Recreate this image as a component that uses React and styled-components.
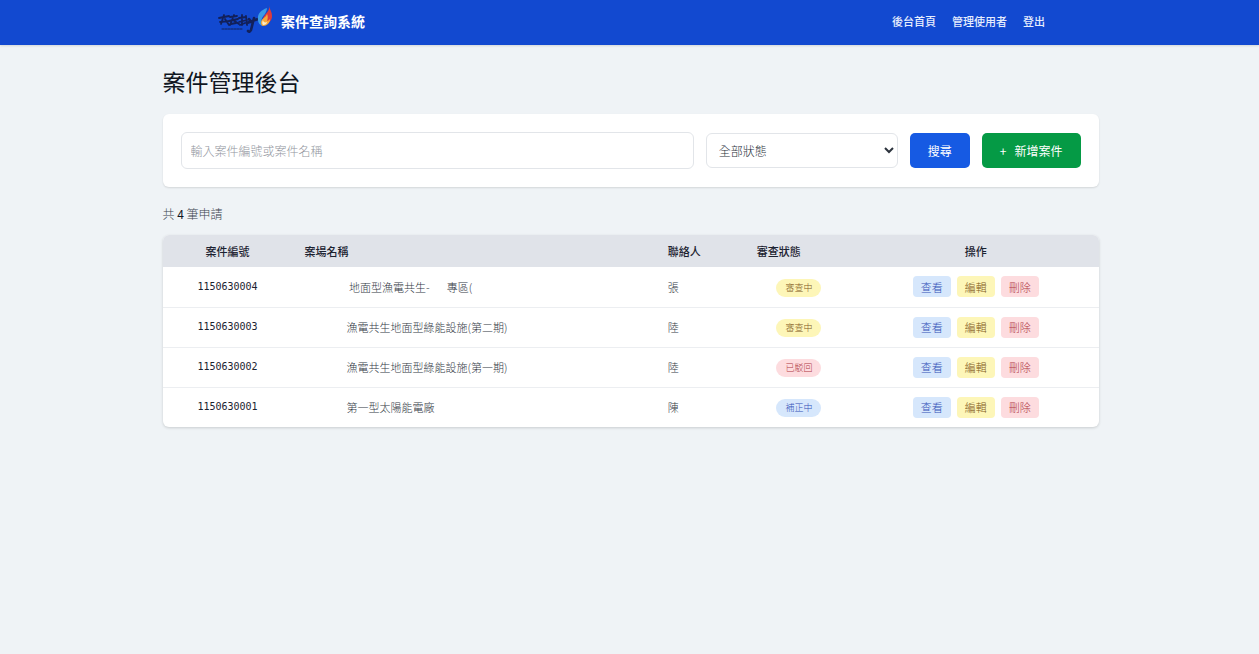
import React, { useState } from 'react'
import styled, { createGlobalStyle } from 'styled-components'

const cases = [
    { id: '1150630004', name: '\u00a0地面型漁電共生-\u00a0\u00a0\u00a0\u00a0\u00a0\u00a0\u00a0專區(', contact: '張', status: '審查中' },
    { id: '1150630003', name: '漁電共生地面型綠能設施(第二期)', contact: '陸', status: '審查中' },
    { id: '1150630002', name: '漁電共生地面型綠能設施(第一期)', contact: '陸', status: '已駁回' },
    { id: '1150630001', name: '第一型太陽能電廠', contact: '陳', status: '補正中' },
]

const tones = {
    blue: { bg: '#d6e7fc', color: '#3450b8' },
    yellow: { bg: '#fdf6b8', color: '#80591a' },
    red: { bg: '#fddcdf', color: '#b03a44' },
}

const statusTone = {
    '審查中': 'yellow',
    '已駁回': 'red',
    '補正中': 'blue',
}

const Logo = () => (
    <svg width="54" height="30" viewBox="0 0 54 30" aria-hidden="true">
        <g fill="none" stroke="#12205a" strokeLinecap="round" strokeLinejoin="round">
            <path strokeWidth="1.8" d="M1 12l10-2M2 16l9-1M6 9l-3 9M7 13l4 6M12 11l7-1M11 15l9-2M16 9l-4 10M15 14l6 4M13 18l5-1" />
            <path strokeWidth="1.8" d="M21 12l7-1M21 16l8-2M24 9v10M28 10l1 9M22 19l5-2" />
            <path strokeWidth="2.6" d="M29 17l11-4M31 13l2 3M36 12l-3 12c-1 2-2 2-3 1" />
            <path strokeWidth="1" strokeDasharray="2 1" d="M4 23h21" />
        </g>
        <path fill="#3a9be6" d="M49 2c-6 2-10 6-9 12 0 3 2 5 4 6-2-5 0-9 3-12 1-2 2-4 2-6z" />
        <path fill="#dd3b3c" d="M51 0c1 4-2 6-4 9-2 2-3 6-2 9 5 1 9-3 9-8 0-4-2-6-3-10z" />
        <path fill="#f6a93a" d="M49 8c-1 4-6 4-6 9 0 2 1 3 2 3 4 0 7-3 7-7-1 1-2 2-3 2 1-3 1-5 0-7z" />
        <path fill="#fbeecb" d="M45 14c-1 2-1 4 0 5 2 0 4-1 4-3-2 1-4 0-4-2z" />
    </svg>
)

const App = () => {

    const [keyword, setKeyword] = useState('');
    const [status, setStatus] = useState('');

    return (
        <>
            <GlobalStyle />
            <Header>
                <HeaderInner>
                    <Brand href="#">
                        <Logo />
                        案件查詢系統
                    </Brand>
                    <Nav>
                        <NavLink href="#">後台首頁</NavLink>
                        <NavLink href="#">管理使用者</NavLink>
                        <NavLink href="#">登出</NavLink>
                    </Nav>
                </HeaderInner>
            </Header>
            <Main>
                <Title>案件管理後台</Title>
                <SearchCard onSubmit={(e) => e.preventDefault()}>
                    <SearchInput
                        type="text"
                        aria-label="輸入案件編號或案件名稱"
                        placeholder="輸入案件編號或案件名稱"
                        value={keyword}
                        onChange={(e) => setKeyword(e.target.value)}
                    />
                    <StatusSelect aria-label="全部狀態" value={status} onChange={(e) => setStatus(e.target.value)}>
                        <option value="">全部狀態</option>
                        <option value="審查中">審查中</option>
                        <option value="已駁回">已駁回</option>
                        <option value="補正中">補正中</option>
                    </StatusSelect>
                    <Button type="submit" $bg="#165ae3">搜尋</Button>
                    <Button type="button" $bg="#059a45"><span>+</span> 新增案件</Button>
                </SearchCard>
                <Count>共 <b>{cases.length}</b> 筆申請</Count>
                <Table>
                    <thead>
                        <tr>
                            <Th $width="13.9%" $center>案件編號</Th>
                            <Th $width="38.8%">案場名稱</Th>
                            <Th $width="9.5%">聯絡人</Th>
                            <Th $width="11.6%">審查狀態</Th>
                            <Th $width="26.2%" $center>操作</Th>
                        </tr>
                    </thead>
                    <tbody>
                        {cases.map((item) => (
                            <Row key={item.id}>
                                <IdCell>{item.id}</IdCell>
                                <NameCell>{item.name}</NameCell>
                                <Td>{item.contact}</Td>
                                <Td $center>
                                    <Badge $tone={statusTone[item.status]}>{item.status}</Badge>
                                </Td>
                                <Td $center>
                                    <Actions>
                                        <ActionButton type="button" $tone="blue">查看</ActionButton>
                                        <ActionButton type="button" $tone="yellow">編輯</ActionButton>
                                        <ActionButton type="button" $tone="red">刪除</ActionButton>
                                    </Actions>
                                </Td>
                            </Row>
                        ))}
                    </tbody>
                </Table>
            </Main>
        </>
    )
}

export default App

const GlobalStyle = createGlobalStyle`
    * {
        box-sizing: border-box;
    }

    body {
        margin: 0;
        background-color: #eff3f6;
        color: #1b2230;
        font-family: "Noto Sans CJK TC", sans-serif;
        font-size: 12px;
        line-height: 18px;
    }

    button, input, select {
        font-family: inherit;
    }
`

const Header = styled.header`
    background-color: #1249d0;
    padding: 0 16px 4px 20px;
    box-shadow: 0 1px 2px rgba(0, 0, 0, 0.12);
`

const HeaderInner = styled.div`
    max-width: 827px;
    height: 41px;
    margin: 0 auto;
    display: flex;
    justify-content: space-between;
    align-items: center;
`

const Brand = styled.a`
    display: flex;
    align-items: center;
    gap: 9px;
    color: white;
    font-size: 14px;
    font-weight: 700;
    text-decoration: none;
`

const Nav = styled.nav`
    display: flex;
    gap: 16px;
`

const NavLink = styled.a`
    color: #e6edfd;
    font-size: 11px;
    font-weight: 500;
    text-decoration: none;

    &:hover {
        text-decoration: underline;
    }
`

const Main = styled.main`
    max-width: 972px;
    margin: 0 auto;
    padding: 22px 17px 24px 19px;
`

const Title = styled.h1`
    margin: 0 0 18px;
    font-size: 23px;
    font-weight: 400;
    line-height: 29px;
    color: #10161f;
`

const SearchCard = styled.form`
    display: flex;
    align-items: center;
    gap: 12px;
    padding: 18px;
    background-color: white;
    border-radius: 6px;
    box-shadow: 0 1px 2px rgba(0, 0, 0, 0.12);
`

const SearchInput = styled.input`
    flex: 1;
    min-width: 0;
    height: 37px;
    padding: 0 9px;
    border: 1px solid #e2e5e9;
    border-radius: 6px;
    background-color: white;
    font-size: 12px;

    &::placeholder {
        color: #92969e;
        font-weight: 300;
    }
`

const StatusSelect = styled.select`
    width: 192px;
    height: 35px;
    padding: 0 0 0 8px;
    border: 1px solid #e2e5e9;
    border-radius: 6px;
    background-color: white;
    color: #2c333d;
    font-size: 12px;
    font-weight: 300;
`

const Button = styled.button`
    display: flex;
    align-items: center;
    justify-content: center;
    gap: 8px;
    height: 35px;
    padding: 0 18px;
    border: 0;
    border-radius: 5px;
    background-color: ${(props) => props.$bg};
    color: white;
    font-size: 12px;
    white-space: nowrap;
    cursor: pointer;
`

const Count = styled.p`
    margin: 18px 0 12px;
    color: #3c4450;
    font-weight: 300;

    b {
        color: #10161f;
        font-weight: 400;
    }
`

const Table = styled.table`
    width: 100%;
    table-layout: fixed;
    border-collapse: collapse;
    border-radius: 6px;
    overflow: hidden;
    background-color: white;
    box-shadow: 0 1px 3px rgba(0, 0, 0, 0.16);
`

const Th = styled.th`
    width: ${(props) => props.$width};
    height: 32px;
    padding: 0 12px;
    background-color: #e0e3e9;
    text-align: ${(props) => (props.$center ? 'center' : 'left')};
    font-size: 11px;
    font-weight: 500;
`

const Row = styled.tr`
    border-bottom: 1px solid #eceef1;

    &:last-child {
        border-bottom: 0;
    }
`

const Td = styled.td`
    height: 40px;
    padding: 0 12px;
    text-align: ${(props) => (props.$center ? 'center' : 'left')};
    color: #333a45;
    font-size: 11px;
    font-weight: 300;
`

const IdCell = styled(Td)`
    text-align: center;
    color: #1b2230;
    font-family: "DejaVu Sans Mono", monospace;
    font-size: 10px;
    font-weight: 400;
`

const NameCell = styled(Td)`
    padding-left: 54px;
`

const Badge = styled.span`
    display: inline-block;
    padding: 0 9px;
    border-radius: 9px;
    background-color: ${(props) => tones[props.$tone].bg};
    color: ${(props) => tones[props.$tone].color};
    font-size: 9px;
    line-height: 18px;
`

const Actions = styled.div`
    display: flex;
    justify-content: center;
    gap: 6px;
`

const ActionButton = styled.button`
    height: 21px;
    padding: 0 8px;
    border: 0;
    border-radius: 4px;
    background-color: ${(props) => tones[props.$tone].bg};
    color: ${(props) => tones[props.$tone].color};
    font-size: 11px;
    font-weight: 300;
    cursor: pointer;
`
